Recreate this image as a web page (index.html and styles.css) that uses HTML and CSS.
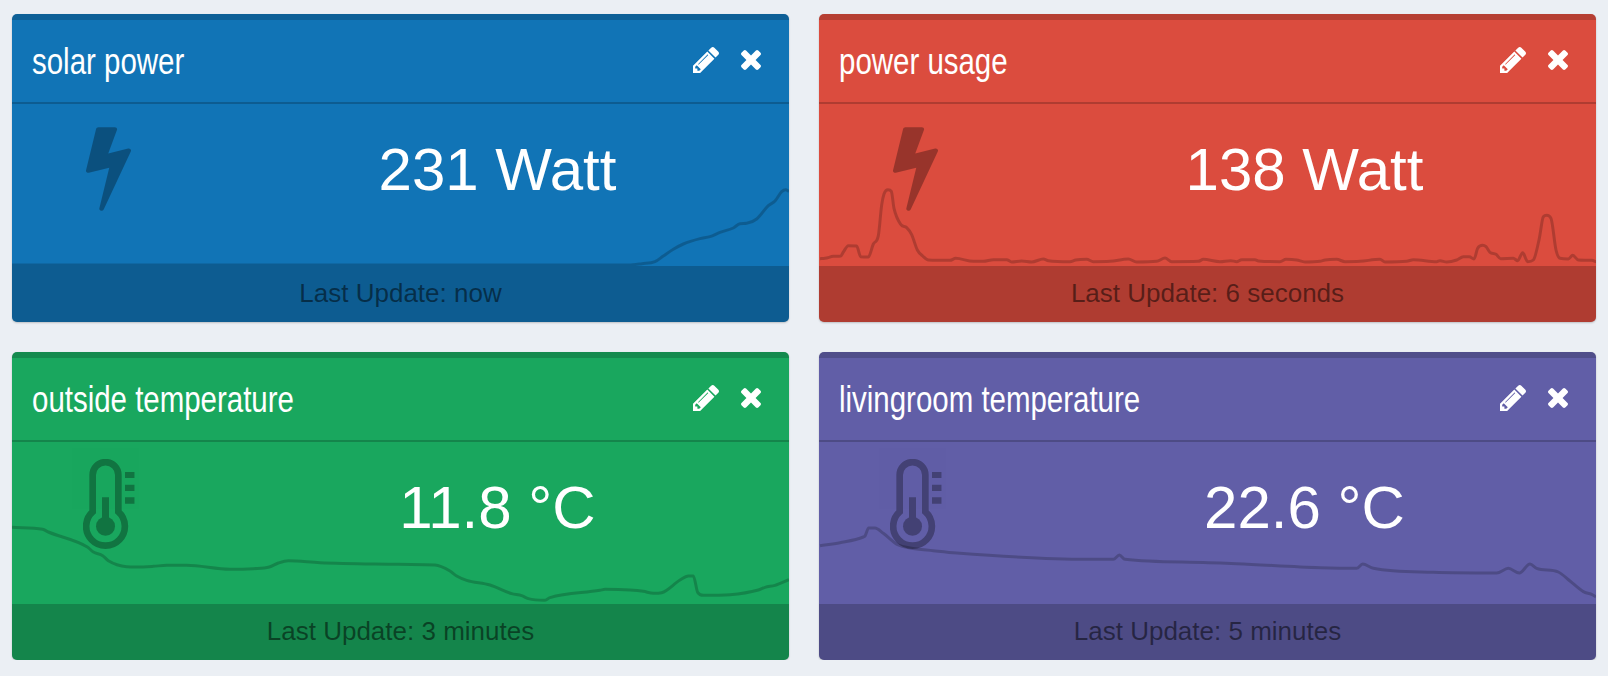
FILE: index.html
```
<!DOCTYPE html>
<html lang="en">
<head>
<meta charset="utf-8">
<title>Sensors</title>
<link rel="stylesheet" href="styles.css">
</head>
<body>
<svg class="defs" aria-hidden="true">
  <symbol id="pencil" viewBox="0 149 1515 1515"><path d="M363 1536l91-91-235-235-91 91v107h128v128h107zM886 608q0-22-22-22-10 0-17 7l-542 542q-7 7-7 17 0 22 22 22 10 0 17-7l542-542q7-7 7-17zM832 416l416 416-832 832h-416v-416zM1515 512q0 53-37 90l-166 166-416-416 166-165q36-38 90-38 53 0 91 38l235 234q37 39 37 91z"/></symbol>
  <symbol id="times" viewBox="110 366 1188 1188"><path d="M1298 1322q0 40-28 68l-136 136q-28 28-68 28t-68-28l-294-294-294 294q-28 28-68 28t-68-28l-136-136q-28-28-28-68t28-68l294-294-294-294q-28-28-28-68t28-68l136-136q28-28 68-28t68 28l294 294 294-294q28-28 68-28t68 28l136 136q28 28 28 68t-28 68l-294 294 294 294q28 28 28 68z"/></symbol>
  <symbol id="bolt" viewBox="448 128 896 1664"><path d="M1333 566q18 20 7 44l-540 1157q-13 25-42 25-4 0-14-2-17-5-25.500-19t-4.500-30l197-808-406 101q-4 1-12 1-18 0-31-11-18-15-13-39l201-825q4-14 16-23t28-9h328q19 0 32 12.500t13 29.500q0 8-5 18l-171 463 396-98q8-2 12-2 19 0 34 15z"/></symbol>
  <symbol id="thermometer" viewBox="249 369 155 270">
    <path d="M278 527.600V417a38.500 38.500 0 0 1 77 0V527.600A58 58 0 1 1 278 527.600Z" fill="none" stroke="#000" stroke-width="20"/>
    <circle cx="316.500" cy="571" r="28.500"/>
    <path d="M306 484h21v70h-21zM375 408h29v18h-29zM375 446h29v19h-29zM375 484h29v19h-29z"/>
  </symbol>
</svg>
<main class="grid">
  <section class="card blue">
    <header class="head"><h3 class="title">solar power</h3><svg class="edit"><use href="#pencil"/></svg><svg class="close"><use href="#times"/></svg></header>
    <div class="body">
      <div class="icon"><svg class="bolt"><use href="#bolt"/></svg></div>
      <div class="value">231 Watt</div>
      <svg class="chart" viewBox="0 0 2331 486"><path data-points="0,483 1850,483 1890,479 1929,473 1954,456 1984,436 2014,420 2064,404 2094,398 2124,385 2164,372 2184,359 2204,358 2234,345 2269,305 2289,291 2309,263 2321,257 2331,262"/></svg>
    </div>
    <footer class="foot">Last Update: now</footer>
  </section>
  <section class="card red">
    <header class="head"><h3 class="title">power usage</h3><svg class="edit"><use href="#pencil"/></svg><svg class="close"><use href="#times"/></svg></header>
    <div class="body">
      <div class="icon"><svg class="bolt"><use href="#bolt"/></svg></div>
      <div class="value">138 Watt</div>
      <svg class="chart" viewBox="0 0 2331 486"><path data-points="3,464 18,463 43,457 65,456 73,444 88,425 113,426 125,458 148,459 163,420 178,395 188,303 195,270 207,257 217,262 225,313 246,362 263,371 278,392 295,438 311,456 328,468 393,469 410,463 463,472 493,472 523,467 563,467 578,474 608,471 638,474 673,465 688,470 753,473 770,468 803,466 823,473 873,472 928,465 953,474 1013,472 1038,462 1058,473 1138,472 1153,466 1203,473 1235,470 1253,473 1268,467 1308,467 1318,471 1383,473 1401,466 1433,468 1458,474 1503,472 1518,468 1553,466 1578,473 1623,472 1683,466 1698,474 1763,472 1783,467 1853,473 1863,470 1883,474 1913,468 1933,458 1951,458 1965,465 1976,433 1991,424 2001,428 2013,445 2031,451 2045,464 2083,463 2096,470 2111,446 2126,473 2143,468 2161,403 2173,338 2183,334 2196,343 2211,438 2223,463 2248,465 2261,454 2278,468 2318,469 2333,474"/></svg>
    </div>
    <footer class="foot">Last Update: 6 seconds</footer>
  </section>
  <section class="card green">
    <header class="head"><h3 class="title">outside temperature</h3><svg class="edit"><use href="#pencil"/></svg><svg class="close"><use href="#times"/></svg></header>
    <div class="body">
      <div class="icon"><svg class="thermometer"><use href="#thermometer"/></svg></div>
      <div class="value">11.8 °C</div>
      <svg class="chart" viewBox="0 0 2331 486"><path data-points="0,256 92,262 109,270 226,315 244,330 272,341 289,356 344,374 374,375 424,373 464,370 524,370 654,382 724,380 772,375 799,363 829,356 924,362 1159,367 1269,369 1314,387 1334,402 1364,415 1434,429 1499,455 1529,461 1549,470 1597,475 1614,467 1764,445 1779,442 1854,444 1894,448 1924,454 1949,452 2004,414 2029,402 2044,402 2057,451 2074,460 2154,458 2239,444 2259,436 2289,430 2331,413"/></svg>
    </div>
    <footer class="foot">Last Update: 3 minutes</footer>
  </section>
  <section class="card purple">
    <header class="head"><h3 class="title">livingroom temperature</h3><svg class="edit"><use href="#pencil"/></svg><svg class="close"><use href="#times"/></svg></header>
    <div class="body">
      <div class="icon"><svg class="thermometer"><use href="#thermometer"/></svg></div>
      <div class="value">22.6 °C</div>
      <svg class="chart" viewBox="0 0 2331 486"><path data-points="3,311 63,302 133,285 138,282 149,258 168,258 193,274 238,309 273,318 343,326 413,333 803,352 883,352 901,339 918,352 1168,362 1253,365 1503,377 1613,379 1631,366 1663,379 1843,391 2033,393 2068,379 2101,393 2133,366 2153,379 2218,390 2253,417 2293,449 2318,457 2331,465"/></svg>
    </div>
    <footer class="foot">Last Update: 5 minutes</footer>
  </section>
</main>
<script src="chart.js"></script>
</body>
</html>
```

FILE: styles.css
```
html { overflow: hidden; }
body {
  margin: 0;
  background: #ebeff4;
  font-family: "Liberation Sans", Arial, sans-serif;
}
.defs { display: none; }
.grid {
  display: grid;
  grid-template-columns: 777px 777px;
  grid-template-rows: 308px 308px;
  gap: 30px;
  padding: 14px 12px 0;
}
.card {
  box-sizing: border-box;
  height: 308px;
  border-top: 6px solid rgba(0, 0, 0, .17);
  border-radius: 5px;
  box-shadow: 0 1px 2px rgba(0, 0, 0, .2);
  overflow: hidden;
  display: flex;
  flex-direction: column;
}
.blue { background-color: #1174b6; }
.red { background-color: #db4c3e; }
.green { background-color: #19a75e; }
.purple { background-color: #615ea7; }
.head {
  box-sizing: border-box;
  height: 84px;
  flex: none;
  display: flex;
  align-items: center;
  padding: 0 28px 4px 20px;
  border-bottom: 2px solid rgba(0, 0, 0, .2);
}
.title {
  flex: 1;
  margin: 0;
  padding-top: 6px;
  color: #fff;
  font-size: 36px;
  line-height: 40px;
  font-weight: 400;
  white-space: nowrap;
  transform: scaleX(.818);
  transform-origin: 0 50%;
}
.edit { width: 26px; height: 26px; fill: #fff; margin-right: 22px; padding-top: 1px; }
.close { width: 20px; height: 20px; fill: #fff; padding-top: 1px; }
.body {
  position: relative;
  height: 162px;
  flex: none;
  display: grid;
  grid-template-columns: 194px 1fr;
}
.icon { display: flex; justify-content: center; align-items: flex-start; }
.icon svg { opacity: .3; }
.bolt { width: 45px; height: 84px; margin: 23px 2px 0 0; }
.thermometer { width: 51.7px; height: 90px; margin-top: 17px; overflow: visible; }
.value {
  color: #fff;
  font-size: 60px;
  line-height: 68px;
  padding-top: 32px;
  text-align: center;
}
.chart {
  position: absolute;
  left: 0;
  top: 0;
  width: 777px;
  height: 162px;
  fill: none;
  stroke: rgba(0, 0, 0, .2);
  stroke-width: 9;
  stroke-linejoin: round;
}
.foot {
  height: 56px;
  flex: none;
  line-height: 55px;
  background: rgba(0, 0, 0, .2);
  color: rgba(0, 0, 0, .5);
  font-size: 26px;
  text-align: center;
}
```

FILE: chart.js
```
// Draws each series as a smooth cubic curve that stays flat at its peaks.
document.querySelectorAll("path[data-points]").forEach(function (path) {
  var p = path.dataset.points.split(" ").map(function (s) { return s.split(",").map(Number); });
  var n = p.length, slope = [], m = [];
  for (var i = 0; i < n - 1; i++) slope.push((p[i + 1][1] - p[i][1]) / (p[i + 1][0] - p[i][0]));
  for (i = 0; i < n; i++) {
    if (i === 0) m.push(slope[0]);
    else if (i === n - 1) m.push(slope[n - 2]);
    else {
      var a = slope[i - 1], b = slope[i];
      var limit = 3 * Math.min(Math.abs(a), Math.abs(b));
      var mean = (a + b) / 2;
      m.push(a * b <= 0 ? 0 : Math.sign(mean) * Math.min(Math.abs(mean), limit));
    }
  }
  var d = "M" + p[0];
  for (i = 0; i < n - 1; i++) {
    var h = (p[i + 1][0] - p[i][0]) / 3;
    d += "C" + [p[i][0] + h, p[i][1] + m[i] * h, p[i + 1][0] - h, p[i + 1][1] - m[i + 1] * h, p[i + 1][0], p[i + 1][1]];
  }
  path.setAttribute("d", d);
});
```
